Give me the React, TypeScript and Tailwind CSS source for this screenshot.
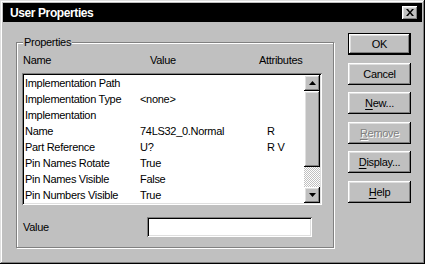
const raised =
  "shadow-[inset_-1px_-1px_0_#000,inset_1px_1px_0_#fff,inset_-2px_-2px_0_#808080,inset_2px_2px_0_#dfdfdf]";
const sunken =
  "shadow-[inset_1px_1px_0_#808080,inset_-1px_-1px_0_#fff,inset_2px_2px_0_#000,inset_-2px_-2px_0_#dfdfdf]";

const rows = [
  { name: "Implementation Path", value: "", attr: "" },
  { name: "Implementation Type", value: "<none>", attr: "" },
  { name: "Implementation", value: "", attr: "" },
  { name: "Name", value: "74LS32_0.Normal", attr: "R" },
  { name: "Part Reference", value: "U?", attr: "R V" },
  { name: "Pin Names Rotate", value: "True", attr: "" },
  { name: "Pin Names Visible", value: "False", attr: "" },
  { name: "Pin Numbers Visible", value: "True", attr: "" },
];

function Btn({
  label,
  hot,
  rest,
  isDefault,
  disabled,
}: {
  label?: string;
  hot?: string;
  rest?: string;
  isDefault?: boolean;
  disabled?: boolean;
}) {
  const text = (
    <span
      className={
        disabled ? "text-[#808080] [text-shadow:1px_1px_0_#fff]" : "text-black"
      }
    >
      {hot && <span className="underline underline-offset-2">{hot}</span>}
      {rest}
      {label}
    </span>
  );
  if (isDefault) {
    return (
      <div className="h-[22px] w-[63px] border border-black">
        <div className={`flex h-full w-full items-center justify-center bg-[#c0c0c0] ${raised}`}>
          {text}
        </div>
      </div>
    );
  }
  return (
    <div className={`flex h-[22px] w-[63px] items-center justify-center bg-[#c0c0c0] ${raised}`}>
      {text}
    </div>
  );
}

function ArrowBtn({ up }: { up?: boolean }) {
  return (
    <div className={`flex h-[16px] w-[16px] items-center justify-center bg-[#c0c0c0] ${raised}`}>
      <svg width="7" height="4" viewBox="0 0 7 4">
        {up ? (
          <path d="M3.5 0 L7 4 L0 4 Z" fill="#000" />
        ) : (
          <path d="M0 0 L7 0 L3.5 4 Z" fill="#000" />
        )}
      </svg>
    </div>
  );
}

export default function App() {
  return (
    <div className="h-[264px] w-[425px] overflow-hidden bg-white">
      <div
        className={`flex h-[264px] w-[425px] flex-col bg-[#c0c0c0] p-[3px] text-[11px] leading-[14px] tracking-[-0.3px] text-black shadow-[inset_-1px_-1px_0_#000,inset_1px_1px_0_#dfdfdf,inset_-2px_-2px_0_#808080,inset_2px_2px_0_#fff] [font-family:'Liberation_Sans',Arial,sans-serif]`}
      >
        {/* title bar */}
        <div className="flex h-[19px] items-center justify-between bg-black pl-[7px] pr-[4px]">
          <span className="text-[12px] font-bold tracking-[-0.4px] text-white">User Properties</span>
          <div className={`flex h-[14px] w-[16px] items-center justify-center bg-[#c0c0c0] ${raised}`}>
            <svg width="8" height="7" viewBox="0 0 8 7">
              <path d="M0 0 L2 0 L4 2.5 L6 0 L8 0 L5 3.5 L8 7 L6 7 L4 4.5 L2 7 L0 7 L3 3.5 Z" fill="#000" />
            </svg>
          </div>
        </div>

        <div className="flex pl-[13px]">
          {/* group box */}
          <div className="relative mt-[20px] h-[206px] w-[318px] border border-[#808080] shadow-[inset_1px_1px_0_#fff,1px_1px_0_#fff] pl-[5px] pt-[10px]">
            <span className="absolute left-[6px] top-[-8px] bg-[#c0c0c0] px-[1px]">Properties</span>

            <div className="flex h-[14px]">
              <span className="w-[128px] pl-[1px]">Name</span>
              <span className="w-[109px]">Value</span>
              <span>Attributes</span>
            </div>

            <div className={`mt-[6px] flex h-[132px] w-[300px] bg-white p-[2px] ${sunken}`}>
              <div className="flex-1 pl-[1px]">
                {rows.map((r) => (
                  <div key={r.name} className="flex h-[16px] items-center">
                    <span className="w-[115px] whitespace-nowrap">{r.name}</span>
                    <span className="w-[127px] whitespace-nowrap">{r.value}</span>
                    <span className="whitespace-pre">{r.attr}</span>
                  </div>
                ))}
              </div>
              <div className="flex w-[16px] flex-col bg-[repeating-conic-gradient(#c0c0c0_0_25%,#fff_0_50%)] bg-[length:2px_2px]">
                <ArrowBtn up />
                <div className={`h-[76px] bg-[#c0c0c0] ${raised}`} />
                <div className="flex-1" />
                <ArrowBtn />
              </div>
            </div>

            <div className="mt-[12px] flex items-center">
              <span className="w-[125px] pl-[1px]">Value</span>
              <div className={`h-[20px] w-[165px] bg-white ${sunken}`} />
            </div>
          </div>

          {/* buttons */}
          <div className="ml-[14px] mt-[11px] flex flex-col gap-[7.5px]">
            <Btn label="OK" isDefault />
            <Btn label="Cancel" />
            <Btn hot="N" rest="ew..." />
            <Btn hot="R" rest="emove" disabled />
            <Btn hot="D" rest="isplay..." />
            <Btn hot="H" rest="elp" />
          </div>
        </div>
      </div>
    </div>
  );
}
